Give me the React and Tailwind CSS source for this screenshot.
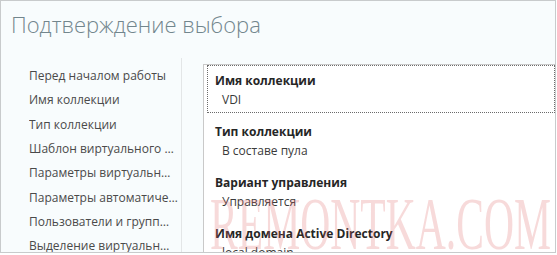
export default function App() {
  const steps = [
    'Перед началом работы',
    'Имя коллекции',
    'Тип коллекции',
    'Шаблон виртуального рабочего стола',
    'Параметры виртуальных рабочих столов',
    'Параметры автоматической настройки',
    'Пользователи и группы пользователей',
    'Выделение виртуальных рабочих столов',
  ];

  const items = [
    { title: 'Имя коллекции', value: 'VDI' },
    { title: 'Тип коллекции', value: 'В составе пула' },
    { title: 'Вариант управления', value: 'Управляется' },
    { title: 'Имя домена Active Directory', value: 'local.domain' },
  ];

  return (
    <div className="relative w-[556px] h-[253px] overflow-hidden bg-[#f8fcfd] border border-[#c8cbcc] font-['Open_Sans',sans-serif]">
      {/* Заголовок */}
      <div className="h-[57px] pl-[10px] pt-[7px]">
        <h1 className="text-[22px] font-light leading-[32px] text-[#72868d]">Подтверждение выбора</h1>
      </div>

      <div className="flex pt-[6px]">
        {/* Навигация по шагам */}
        <div className="w-[181px] shrink-0 border-r border-[#e3e6e7] h-[200px] -mt-[6px] pt-[6px] pl-[28px] pr-[3px]">
          {steps.map((s) => (
            <div key={s} className="h-[24.3px] flex items-center text-[12px] text-[#4a4a4a]">
              <span className="truncate">{s}</span>
            </div>
          ))}
        </div>

        {/* Сводка */}
        <div className="flex-1 ml-[21px] bg-white border-t border-l border-[#c9c9c9] pl-[3px] flex flex-col gap-[3px]">
          {items.map((it, i) => (
            <div
              key={it.title}
              className={
                i === 0
                  ? 'h-[48px] border border-dotted border-[#6b6b6b] pl-[7px] pt-[6px]'
                  : 'h-[48px] border border-transparent pl-[7px] pt-[6px]'
              }
            >
              <div className="text-[12px] font-bold leading-[18px] text-[#262626]">{it.title}</div>
              <div className="ml-[7px] text-[12px] leading-[19px] text-[#3a3a3a]">{it.value}</div>
            </div>
          ))}
        </div>
      </div>

      {/* Водяной знак */}
      <div className="pointer-events-none absolute left-[209px] top-[178px] origin-left scale-x-[0.555] whitespace-nowrap font-['Liberation_Serif',serif] text-[75px] leading-[90px] text-[#e06a6a]/25">
        REMONTKA.COM
      </div>
    </div>
  );
}
